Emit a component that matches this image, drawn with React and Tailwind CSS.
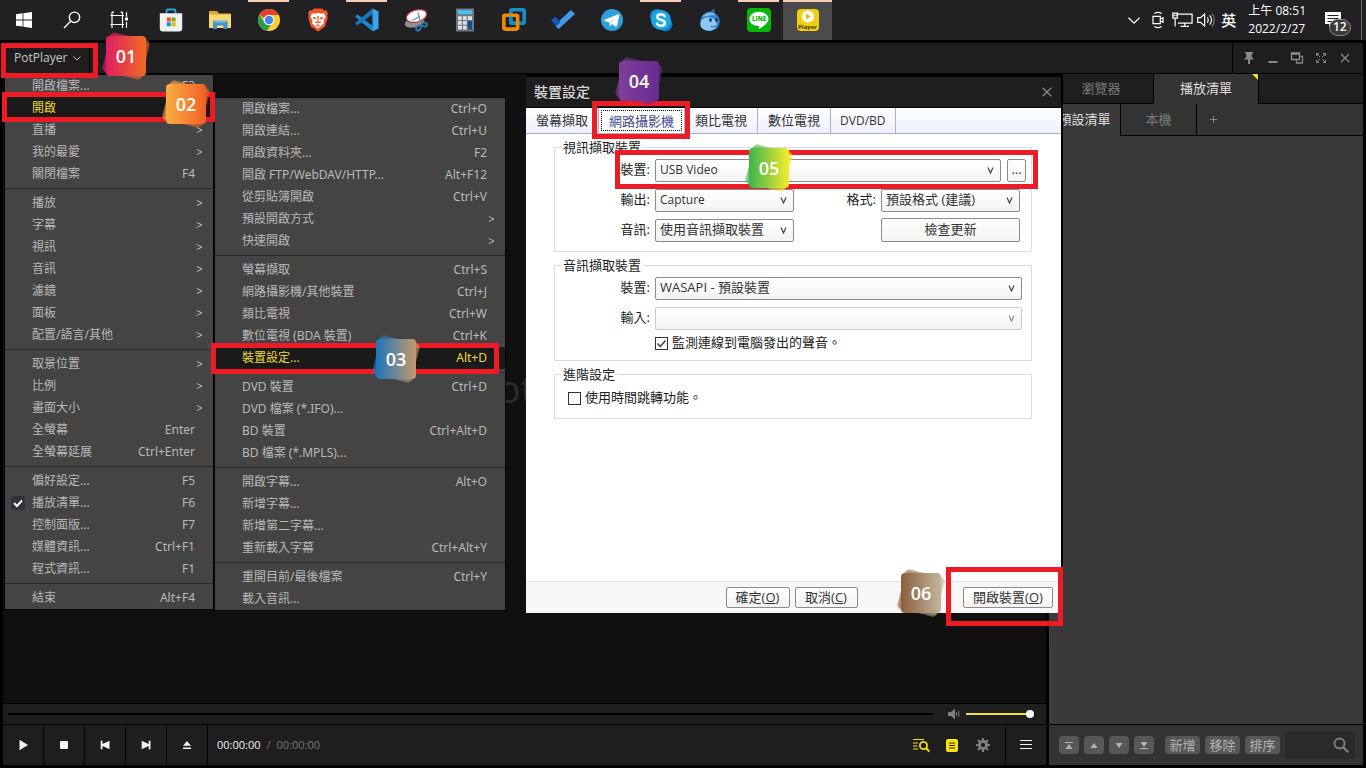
import React from "react";

const FONT = "font-['Open_Sans','Noto_Sans_CJK_TC',sans-serif]";

/* ---------- taskbar icons ---------- */

const Svg = ({ size = 24, children, ...p }) => (
  <svg width={size} height={size} viewBox="0 0 24 24" fill="none" aria-hidden="true" {...p}>
    {children}
  </svg>
);

const StartIcon = () => (
  <Svg>
    <path fill="#fff" d="M4 6.200l6.600-.9v6.200H4zM11.400 5.200L20 4v7.500h-8.600zM4 12.400h6.600v6.200L4 17.700zM11.400 12.400H20V20l-8.600-1.200z" />
  </Svg>
);
const SearchIcon = () => (
  <Svg stroke="#fff" strokeWidth="1.400">
    <circle cx="14.500" cy="9.300" r="5.200" />
    <path d="M10.600 13.200L4 20" />
  </Svg>
);
const TaskViewIcon = () => (
  <Svg stroke="#fff" strokeWidth="1.200">
    <path d="M4 4v3.500h10.500V4M4 20v-3.500h10.500V20M4 4.200h2M12.500 4.200h2M4 7.500v9M14.500 7.500v9M2.500 7.500h13.500M2.500 16.500h13.500M18.500 4v5M18.500 14v6" />
    <path d="M17 9.500h3v3h-3z" fill="#fff" stroke="none" />
  </Svg>
);
const StoreIcon = () => (
  <Svg>
    <path d="M7.500 6V2.800A1.300 1.300 0 018.800 1.500h6.400a1.300 1.300 0 011.300 1.300V6" stroke="#2aa5d8" strokeWidth="1.800" />
    <path d="M.8 5.200h22.400v15.300a3 3 0 01-3 3H3.800a3 3 0 01-3-3z" fill="#eef0f1" />
    <path d="M7.800 9.500h4v4h-4z" fill="#f25022" />
    <path d="M12.600 9.500h4v4h-4z" fill="#6fae1c" />
    <path d="M7.800 14.300h4v4h-4z" fill="#0a9be0" />
    <path d="M12.600 14.300h4v4h-4z" fill="#f5b400" />
  </Svg>
);
const FolderIcon = () => (
  <Svg>
    <path d="M1 3h8l2 2.500h12V20H1z" fill="#e3a52d" />
    <path d="M1 6.500h22V20H1z" fill="#fbd774" />
    <path d="M5 21v-8.200h14.500V21h-4v-3.600H9V21z" fill="#3f93d2" />
    <path d="M6.500 12.800h11.500v2H6.500z" fill="#6fb8e8" />
  </Svg>
);
const ChromeIcon = () => (
  <Svg>
    <circle cx="12" cy="12" r="11" fill="#f9cf31" />
    <path d="M2.500 6.500A11 11 0 0121.600 6.600L22 7H12a5 5 0 00-4.600 3.200z" fill="#e0412f" />
    <path d="M2.500 6.500l5.200 8.200A5 5 0 0012 17l2-.3-4.200 6.100A11 11 0 012.500 6.500z" fill="#2b9c4c" />
    <circle cx="12" cy="12" r="5.300" fill="#fff" />
    <circle cx="12" cy="12" r="4.200" fill="#4587f0" />
  </Svg>
);
const BraveIcon = () => (
  <Svg>
    <path d="M8 .5h8l2 2 2.300-.2 1.700 3-.8 2.200.5 2.500-2.600 8.500L12 23.500l-7.100-5L2.300 10l.5-2.500L2 5.300l1.700-3L6 2.500z" fill="#f1562b" />
    <path d="M6 5.200l3 .5 3-.9 3 .9 3-.5 1.500 3.400-2 4.200.4 2.400-2.600 2.600-3.300 2.700-3.300-2.700L6.100 15.200l.4-2.400-2-4.200z" fill="#fff" />
    <path d="M6.500 8.800l3.800.9-.6 1.700-2.200-.6zM17.500 8.800l-3.800.9.6 1.700 2.200-.6zM11.200 8h1.600l-.3 5h-1zM8 14l4-.8 4 .8-2.300 1.300L12 14.700l-1.700.6zM10 17.300l2-1.100 2 1.100-2 1.500z" fill="#f1562b" />
  </Svg>
);
const CodeIcon = () => (
  <Svg>
    <path d="M0 8.600L2.400 6.600 17.500 18v5.200L0 8.600z" fill="#1c8ad6" />
    <path d="M17.500.5L0 15.300l2.400 2.100L17.500 6z" fill="#1577bd" />
    <path d="M17.500.5l6 2.900v17.200l-6 2.900z" fill="#38a6ef" />
  </Svg>
);
const SnipIcon = () => (
  <Svg>
    <ellipse cx="10.500" cy="14.500" rx="10" ry="4.800" transform="rotate(-12 10.500 14.500)" fill="#8c8f92" />
    <ellipse cx="12.500" cy="8" rx="10.500" ry="6" transform="rotate(-16 12.500 8)" fill="#fbfbfb" stroke="#c2363e" strokeWidth="1.200" />
    <path d="M8.500 12.500l8-4.500M14 4.500l2.800 12" stroke="#8d9194" strokeWidth="1.300" />
    <ellipse cx="14.500" cy="20" rx="2" ry="2.800" transform="rotate(30 14.500 20)" stroke="#2f7fb4" strokeWidth="1.700" />
    <ellipse cx="20.300" cy="16.500" rx="2.800" ry="2" transform="rotate(10 20.300 16.500)" stroke="#2f7fb4" strokeWidth="1.700" />
  </Svg>
);
const CalcIcon = () => (
  <Svg>
    <path d="M3 .5h18v23H3z" fill="#71777d" />
    <path d="M4.800 2.200h14.400v4H4.800z" fill="#41c5ef" />
    <path d="M5 8.200h3.800V12H5zM9.900 8.200h3.800V12H9.900zM14.800 8.200h4.200V12h-4.200zM5 13h3.800v3.700H5zM9.900 13h3.800v3.700H9.900zM5 17.800h3.800v3.700H5zM9.900 17.800h3.800v3.700H9.900z" fill="#dfe3e6" />
    <path d="M14.800 13h4.200v8.500h-4.200z" fill="#12508f" />
  </Svg>
);
const VmwareIcon = () => (
  <Svg strokeWidth="3.600">
    <rect x="8.800" y="1.800" width="13.400" height="13.400" rx="1.500" stroke="#1690cc" />
    <rect x="1.800" y="7.300" width="13.800" height="13.800" rx="1.500" stroke="#f08a00" />
    <path d="M8.800 8.500v5.200a1.500 1.500 0 001.500 1.500H13" stroke="#1690cc" />
  </Svg>
);
const TodoIcon = () => (
  <Svg>
    <path d="M7.500 21L3.800 17 20 1.900l4 4z" fill="#3f9ced" />
    <path d="M0 12.500l4-4 5.600 5.600-4 4z" fill="#1b58b4" />
  </Svg>
);
const TelegramIcon = () => (
  <Svg>
    <circle cx="12" cy="12" r="11" fill="#2ba0da" />
    <path d="M4.500 11.700l13.800-5.500c.7-.2 1.200.2 1 1.100l-2.300 10.800c-.2.800-.7 1-1.400.6l-3.500-2.600-1.700 1.700c-.4.300-.8.100-.8-.4l-.3-2.900-4.700-1.600c-.8-.3-.8-.900-.1-1.200z" fill="#fff" />
    <path d="M9.500 14.500l6.500-5.700-5.200 6.200-.8 2z" fill="#b8d4e8" />
  </Svg>
);
const SkypeIcon = () => (
  <Svg>
    <circle cx="8" cy="8" r="7" fill="#1687cb" />
    <circle cx="16.500" cy="16.500" r="6.800" fill="#0f82c6" />
    <circle cx="12" cy="12" r="10" fill="#1ba7e8" />
    <path d="M15.800 8.200C15 6.800 13.600 6.300 12 6.300c-2.200 0-3.700 1.100-3.700 2.800 0 3.900 7.600 1.900 7.600 5.600 0 1.900-1.700 3-3.900 3-1.900 0-3.400-.7-4.100-2.200" stroke="#fff" strokeWidth="2.400" strokeLinecap="round" />
  </Svg>
);
const DropIcon = () => (
  <Svg>
    <path d="M11 5l5-4.500 1 5z" fill="#2d6fb5" />
    <circle cx="12" cy="13.500" r="9.700" fill="#3484cf" />
    <ellipse cx="10.500" cy="16" rx="8.300" ry="6.700" fill="#8cc8f3" />
    <path d="M4 9c3-5 10-6 14-2-5 0-10 1-14 2z" fill="#78b8ea" />
    <ellipse cx="12.500" cy="12" rx="1.200" ry="2" fill="#11263f" />
    <ellipse cx="18.500" cy="12" rx="1.200" ry="2" fill="#11263f" />
    <path d="M13 18.500c2 .7 4 .2 5-1" stroke="#2b5d93" />
  </Svg>
);
const LineIcon = () => (
  <Svg>
    <rect width="24" height="24" rx="4" fill="#06b806" />
    <path d="M12 3.800c5.200 0 9.500 3.100 9.500 7.100 0 3.700-4.900 7.200-9 9.800-.6.300-.7-.1-.6-.6l.1-2.100C6.300 18 2.500 14.800 2.500 10.900c0-4 4.300-7.100 9.500-7.100z" fill="#fff" />
    <text x="12" y="13" textAnchor="middle" fontSize="6" fontWeight="800" fill="#06b806">LINE</text>
  </Svg>
);
const PotIcon = () => (
  <span className="grid h-[22px] w-[22px] justify-items-center rounded-sm bg-[#f2ce10]">
    <svg width="14" height="13" viewBox="0 0 14 13" className="mt-px" aria-hidden="true">
      <circle cx="7" cy="6.500" r="6" fill="#fff" />
      <path d="M5 3.500l5 3-5 3z" fill="#e8b90a" />
    </svg>
    <span className="text-[6px] font-bold leading-[8px] text-[#3b3208]">Player</span>
  </span>
);

const TASKS = [
  ["Microsoft Store", StoreIcon, ""],
  ["檔案總管", FolderIcon, ""],
  ["Chrome", ChromeIcon, "on"],
  ["Brave", BraveIcon, ""],
  ["VS Code", CodeIcon, "on"],
  ["剪取工具", SnipIcon, ""],
  ["小算盤", CalcIcon, ""],
  ["VMware", VmwareIcon, ""],
  ["To Do", TodoIcon, ""],
  ["Telegram", TelegramIcon, ""],
  ["Skype", SkypeIcon, "on"],
  ["Drop", DropIcon, ""],
  ["LINE", LineIcon, "on"],
  ["PotPlayer", PotIcon, "active"],
];

function Taskbar() {
  return (
    <header className="flex h-10 shrink-0 items-stretch bg-[#212123] text-white">
      {[["開始", StartIcon], ["搜尋", SearchIcon], ["工作檢視", TaskViewIcon]].map(([n, I]) => (
        <button key={n} aria-label={n} className="grid w-12 place-items-center"><I /></button>
      ))}
      <nav className="flex flex-1 pl-0.5">
        {TASKS.map(([n, I, s]) => (
          <button
            key={n}
            aria-label={n}
            className={`relative grid w-[49px] shrink-0 place-items-center ${s === "active" ? "bg-[#4b4b4c]" : ""}`}
          >
            {s && <span className={`absolute top-0 h-0.5 bg-[#f9ceb2] ${s === "active" ? "inset-x-0" : "inset-x-1"}`} />}
            <I />
          </button>
        ))}
      </nav>
      <div className="flex items-center gap-0.5">
        <Svg size={22} stroke="#fff" strokeWidth="1.400"><path d="M6 9.500l6 6 6-6" /></Svg>
        <Svg size={22} stroke="#fff" strokeWidth="1.300">
          <path d="M8 5c2.500-1.600 5.500-1.600 8 0M8 19c2.500 1.600 5.500 1.600 8 0M6.500 8h8v8h-8zM14.500 11l3-1.500v5l-3-1.500" />
        </Svg>
        <Svg size={22} stroke="#fff" strokeWidth="1.300">
          <path d="M6.500 5.500H23v10H7.500M15 15.500v3.500M10.500 19h9M4.500 10v9" />
          <path d="M2 4.500h5V10H2zM3.500 6v2M5.500 6v2" />
        </Svg>
        <Svg size={22} stroke="#fff" strokeWidth="1.300">
          <path d="M3 9.500h3l4.500-4v13l-4.500-4H3zM13.500 9c1.200 1.500 1.200 4.500 0 6M16 7c2.500 3 2.500 7 0 10" />
          <path d="M18.500 5c3.500 4 3.500 10 0 14" stroke="#777" />
        </Svg>
      </div>
      <span className="self-center pl-1 text-[15px] font-medium leading-5">英</span>
      <time className="self-center pl-3 text-[12px] leading-[18px]">上午 08:51<br />2022/2/27</time>
      <button aria-label="通知" className="relative ml-3.5 grid w-10 place-items-center">
        <svg width="36" height="32" viewBox="0 0 36 32" aria-hidden="true">
          <path d="M3 8h16v12H11l-4 4v-4H3z" fill="#fff" />
          <path d="M5.500 11.500h11M5.500 14.500h11M5.500 17.500h6" stroke="#222" strokeWidth="1.200" />
          <rect x="7.500" y="15.500" width="21" height="16" rx="8" fill="#3a3a3a" stroke="#8a8a8a" />
        </svg>
        <span className="absolute left-[13px] top-[18px] text-[12px] font-semibold leading-[18px]">12</span>
      </button>
      <span className="ml-px mr-1 w-px bg-[#6a6a6a]" />
    </header>
  );
}

/* ---------- context menus ---------- */

const MENU_A = [
  [["開啟檔案...", "F3"], ["開啟", ">", "hot"], ["直播", ">"], ["我的最愛", ">"], ["關閉檔案", "F4"]],
  [["播放", ">"], ["字幕", ">"], ["視訊", ">"], ["音訊", ">"], ["濾鏡", ">"], ["面板", ">"], ["配置/語言/其他", ">"]],
  [["取景位置", ">"], ["比例", ">"], ["畫面大小", ">"], ["全螢幕", "Enter"], ["全螢幕延展", "Ctrl+Enter"]],
  [["偏好設定...", "F5"], ["播放清單...", "F6", "check"], ["控制面版...", "F7"], ["媒體資訊...", "Ctrl+F1"], ["程式資訊...", "F1"]],
  [["結束", "Alt+F4"]],
];
const MENU_B = [
  [["開啟檔案...", "Ctrl+O"], ["開啟連結...", "Ctrl+U"], ["開啟資料夾...", "F2"], ["開啟 FTP/WebDAV/HTTP...", "Alt+F12"], ["從剪貼簿開啟", "Ctrl+V"], ["預設開啟方式", ">"], ["快速開啟", ">"]],
  [["螢幕擷取", "Ctrl+S"], ["網路攝影機/其他裝置", "Ctrl+J"], ["類比電視", "Ctrl+W"], ["數位電視 (BDA 裝置)", "Ctrl+K"], ["裝置設定...", "Alt+D", "hot"]],
  [["DVD 裝置", "Ctrl+D"], ["DVD 檔案 (*.IFO)...", ""], ["BD 裝置", "Ctrl+Alt+D"], ["BD 檔案 (*.MPLS)...", ""]],
  [["開啟字幕...", "Alt+O"], ["新增字幕...", ""], ["新增第二字幕...", ""], ["重新載入字幕", "Ctrl+Alt+Y"]],
  [["重開目前/最後檔案", "Ctrl+Y"], ["載入音訊...", ""]],
];

function Menu({ groups, className }) {
  return (
    <div className={`absolute bg-[#444444] font-['Noto_Sans','Noto_Sans_CJK_TC',sans-serif] text-[12px] text-[#b9b9b9] shadow-[0_0_0_1px_#050505] ${className}`}>
      {groups.map((g, i) => (
        <ul key={i} className={i ? "mt-[3px] border-t border-[#2c2c2c] pt-[3px]" : ""}>
          {g.map(([label, key, state]) => (
            <li key={label}>
              <button
                className={`flex h-[22px] w-full items-center leading-[22px] ${state === "hot" ? "bg-[#1a1a1a] text-[#ecd92e]" : ""}`}
              >
                <span className="flex w-[27px] shrink-0 items-center pl-1.5">
                  {state === "check" && (
                    <svg width="14" height="14" viewBox="0 0 14 14" aria-hidden="true">
                      <rect width="14" height="14" rx="2" fill="#32323a" />
                      <path d="M3 7l3 3 5-5.500" stroke="#fff" strokeWidth="2" fill="none" />
                    </svg>
                  )}
                </span>
                <span className="flex-1 whitespace-nowrap text-left">{label}</span>
                {key === ">" ? (
                  <svg width="7" height="8" viewBox="0 0 7 8" className="mr-2.5" aria-hidden="true">
                    <path d="M.8 1.500L6 4 .8 6.500" stroke="currentColor" fill="none" />
                  </svg>
                ) : (
                  <span className="whitespace-nowrap pr-[18px]">{key}</span>
                )}
              </button>
            </li>
          ))}
        </ul>
      ))}
    </div>
  );
}

/* ---------- device dialog ---------- */

function Combo({ id, value, className, muted, small }) {
  return (
    <span className={`grid h-[23px] ${className}`}>
      <select
        id={id}
        disabled={muted}
        defaultValue={value}
        className={`col-start-1 row-start-1 w-full appearance-none rounded-xs border bg-linear-to-b from-white to-[#f3f3f3] pl-1 pr-6 text-[#333] opacity-100 ${small ? "text-[12px]" : "text-[13px]"} ${muted ? "border-[#c9c9c9]" : "border-[#8b8b8b]"}`}
      >
        <option value={value}>{value}</option>
      </select>
      <svg width="7" height="8" viewBox="0 0 7 8" className="pointer-events-none col-start-1 row-start-1 mr-[7px] self-center justify-self-end" aria-hidden="true">
        <path d="M1 1.500l2.500 5.500L6 1.500" stroke={muted ? "#888" : "#444"} strokeWidth="1.200" fill="none" />
      </svg>
    </span>
  );
}

const Row = ({ children }) => <div className="flex h-[30px] items-center">{children}</div>;
const Label = ({ id, children, className = "w-[95px]" }) => (
  <label htmlFor={id} className={`mr-[5px] shrink-0 text-right ${className}`}>{children}</label>
);
const Group = ({ title, children, className }) => (
  <fieldset className={`min-w-0 border border-[#dcdcdc] ${className}`}>
    <legend className="ml-1.5 h-4 px-0.5 leading-4">{title}</legend>
    {children}
  </fieldset>
);
const Check = ({ id, label, checked, className }) => (
  <div className={`flex h-5 items-center gap-1 ${className}`}>
    <span className="grid">
      <input id={id} type="checkbox" defaultChecked={checked} className="peer col-start-1 row-start-1 h-[13px] w-[13px] appearance-none border border-[#333] bg-white" />
      <svg viewBox="0 0 13 13" className="pointer-events-none invisible col-start-1 row-start-1 h-[13px] w-[13px] peer-checked:visible" aria-hidden="true">
        <path d="M2.500 6.500l2.800 3L10.500 3.500" stroke="#333" strokeWidth="1.300" fill="none" />
      </svg>
    </span>
    <label htmlFor={id}>{label}</label>
  </div>
);
const BTN = "rounded-xs border border-[#8b8b8b] bg-linear-to-b from-white to-[#f3f3f3] text-[#333]";

function Dialog() {
  return (
    <section role="dialog" aria-label="裝置設定" className="absolute left-[526px] top-[74px] flex h-[539px] w-[537px] flex-col border-r-2 border-t-[3px] border-black bg-white text-[13px] text-[#1c1c1c]">
      <div className="flex h-[31px] items-center justify-between border-b border-black bg-[#1e1e1e] px-2">
        <h2 className="text-[14px] font-medium leading-5 text-[#d9d9d9]">裝置設定</h2>
        <button aria-label="關閉" className="p-px text-[#9a9a9a]">
          <svg width="10" height="10" viewBox="0 0 10 10" aria-hidden="true"><path d="M.8.8l8.400 8.400M9.200.8L.8 9.200" stroke="currentColor" strokeWidth="1.200" /></svg>
        </button>
      </div>
      <div role="tablist" className="flex h-[26px] border-b border-[#a9aed2] bg-linear-to-b from-white to-[#edf0fd]">
        {["螢幕擷取", "網路攝影機", "類比電視", "數位電視"].map((t, i) => (
          <button
            key={t}
            role="tab"
            aria-selected={i === 1}
            className={`border-r border-[#a9aed2] ${i === 1 ? "bg-white p-0.5 text-[#3c4a8c]" : "px-2.5 text-[#333]"}`}
          >
            {i === 1 ? <span className="block h-full border border-dotted border-black px-[7px] leading-5">{t}</span> : t}
          </button>
        ))}
        <button role="tab" aria-selected="false" className="border-r border-[#a9aed2] px-[9px] text-[12px] text-[#333]">DVD/BD</button>
      </div>
      <div className="flex flex-1 flex-col gap-[5px] pl-7 pr-[29px] pt-[5px]">
        <Group title="視訊擷取裝置" className="pb-1.5">
          <Row>
            <Label id="dev">裝置:</Label>
            <Combo id="dev" value="USB Video" small className="flex-1" />
            <button className={`ml-1.5 mr-[5px] h-[23px] w-[19px] ${BTN}`}>...</button>
          </Row>
          <Row>
            <Label id="out">輸出:</Label>
            <Combo id="out" value="Capture" small className="w-[139px]" />
            <Label id="fmt" className="flex-1">格式:</Label>
            <Combo id="fmt" value="預設格式 (建議)" className="mr-[11px] w-[139px]" />
          </Row>
          <Row>
            <Label id="aud">音訊:</Label>
            <Combo id="aud" value="使用音訊擷取裝置" className="w-[139px]" />
            <button className={`ml-auto mr-[11px] h-6 w-[139px] ${BTN}`}>檢查更新</button>
          </Row>
        </Group>
        <Group title="音訊擷取裝置" className="pb-[7px]">
          <Row>
            <Label id="adev">裝置:</Label>
            <Combo id="adev" value="WASAPI - 預設裝置" className="mr-[9px] flex-1" />
          </Row>
          <Row>
            <Label id="ain">輸入:</Label>
            <Combo id="ain" value="" muted className="mr-[9px] flex-1" />
          </Row>
          <Check id="mon" checked label="監測連線到電腦發出的聲音。" className="pl-[100px]" />
        </Group>
        <Group title="進階設定" className="pb-2.5">
          <Check id="jump" label="使用時間跳轉功能。" className="mt-1.5 pl-[13px]" />
        </Group>
      </div>
      <div className="grid h-8 grid-cols-[1fr_auto_1fr] items-center border-t border-[#e4e4e4] bg-[#f7f7f7] pl-1 pr-2">
        <span />
        <div className="flex gap-[5px]">
          <button className={`h-[21px] w-16 leading-[19px] ${BTN}`}>確定(<u>O</u>)</button>
          <button className={`h-[21px] w-[63px] leading-[19px] ${BTN}`}>取消(<u>C</u>)</button>
        </div>
        <button className={`h-[21px] w-[90px] justify-self-end leading-[19px] ${BTN}`}>開啟裝置(<u>O</u>)</button>
      </div>
    </section>
  );
}

/* ---------- annotations ---------- */

const FRAMES = [
  "left-[1px] top-[43px] h-[35px] w-[97px]",
  "left-[2px] top-[92px] h-[30px] w-[213px]",
  "left-[211px] top-[343px] h-[31px] w-[288px]",
  "left-[592px] top-[101px] h-[38px] w-[98px]",
  "left-[615px] top-[150px] h-[39px] w-[423px]",
  "left-[946px] top-[567px] h-[59px] w-[117px]",
];
const BADGES = [
  ["01", "#dc1f63", "#f26a23", "left-[106px] top-[36px]"],
  ["02", "#fbae42", "#f15f25", "left-[166px] top-[84px]"],
  ["03", "#1c75bc", "#c49a6c", "left-[376px] top-[339px]"],
  ["04", "#7f3f98", "#652d90", "left-[619px] top-[61px]"],
  ["05", "#39b54a", "#f6ec2f", "left-[749px] top-[148px]"],
  ["06", "#8b5e3c", "#c2b59b", "left-[901px] top-[573px]"],
];

function Badge({ n, from, to, place }) {
  const id = "g" + n;
  return (
    <div className={`pointer-events-none absolute grid h-10 w-10 place-items-center ${place}`}>
      <svg width="40" height="40" viewBox="0 0 40 40" className="col-start-1 row-start-1 overflow-visible" aria-hidden="true">
        <defs>
          <linearGradient id={id}><stop stopColor={from} /><stop offset="1" stopColor={to} /></linearGradient>
        </defs>
        <rect width="40" height="40" rx="4" fill={`url(#${id})`} opacity=".5" transform="rotate(15 20 20)" />
        <rect width="40" height="40" rx="4" fill={`url(#${id})`} opacity=".4" transform="rotate(9 20 20)" />
        <rect width="40" height="40" rx="4" fill={`url(#${id})`} />
      </svg>
      <span className="z-10 col-start-1 row-start-1 text-[18px] font-semibold leading-6 text-white">{n}</span>
    </div>
  );
}

/* ---------- player ---------- */

function WindowButtons() {
  const icons = [
    ["置頂", <path key="a" d="M4 2h8v1.500h-1.200V7L13 9.500H9V14H7V9.500H3L5.200 7V3.500H4z" fill="currentColor" />],
    ["最小化", <path key="b" d="M3.500 11h9v2h-9z" fill="currentColor" />],
    ["還原", <path key="c" d="M2.500 3h8v6.500h-8zM2.500 4h8M11.500 6.500h2v6.500h-6v-2.500" stroke="currentColor" strokeWidth="1.300" fill="none" />],
    ["全螢幕", <path key="d" d="M3.500 6V3.500H6M10 3.500h2.500V6M12.500 10v2.500H10M6 12.500H3.500V10M4 4l3 3M12 4L9 7M12 12L9 9M4 12l3-3" stroke="currentColor" fill="none" />],
    ["關閉", <path key="e" d="M4 4l8 8M12 4l-8 8" stroke="currentColor" strokeWidth="1.300" fill="none" />],
  ];
  return (
    <div className="flex w-[131px] items-center border-l border-black pl-1">
      {icons.map(([n, p]) => (
        <button key={n} aria-label={n} className="grid h-full w-6 place-items-center text-[#8a8a8a]">
          <svg width="16" height="16" viewBox="0 0 16 16" aria-hidden="true">{p}</svg>
        </button>
      ))}
    </div>
  );
}

function Transport() {
  const icons = [
    ["播放", <path key="a" d="M4.500 2.800v10.400L13 8z" />],
    ["停止", <rect key="b" x="4" y="4" width="8" height="8" rx="1" />],
    ["上一個", <path key="c" d="M3.700 3.700h1.800v3.300L12.500 3.700v8.600L5.500 9v3.300H3.700z" />],
    ["下一個", <path key="d" d="M12.500 3.700h-1.800v3.300L3.700 3.700v8.600L10.700 9v3.300h1.800z" />],
    ["開啟", <path key="e" d="M8 4l4 4.800H4zM4 10.500h8V12H4z" />],
  ];
  return (
    <div className="flex h-[41px] items-stretch border-t border-black">
      {icons.map(([n, p]) => (
        <button key={n} aria-label={n} className="grid w-[41px] place-items-center border-r border-black">
          <svg width="16" height="16" viewBox="0 0 16 16" fill="#f2f2f2" aria-hidden="true">{p}</svg>
        </button>
      ))}
      <p className="flex items-center gap-1.5 pl-[9px] text-[11px] leading-4 text-[#777]">
        <span className="text-[#f0f0f0]">00:00:00</span><span>/</span><span>00:00:00</span>
      </p>
      <div className="ml-auto flex items-center gap-4 pr-[15px]">
        <button aria-label="字幕搜尋">
          <svg width="17" height="16" viewBox="0 0 17 16" aria-hidden="true">
            <path d="M0 2.500h11M0 6h5M0 9h4.500M0 12h5" stroke="#f5de10" strokeWidth="1.200" />
            <circle cx="10.500" cy="8.500" r="3.600" stroke="#f5de10" strokeWidth="1.800" fill="none" />
            <path d="M13 11l3.300 3.500" stroke="#f5de10" strokeWidth="2" />
          </svg>
        </button>
        <button aria-label="播放清單">
          <svg width="12" height="13" viewBox="0 0 12 13" aria-hidden="true">
            <rect width="12" height="13" rx="2" fill="#fbe20a" />
            <path d="M3 4h6M3 6.500h6M3 9h6" stroke="#26240f" />
          </svg>
        </button>
        <button aria-label="設定" className="ml-0.5">
          <svg width="14" height="14" viewBox="0 0 14 14" aria-hidden="true">
            <circle cx="7" cy="7" r="3.500" stroke="#7e7e7e" strokeWidth="3" fill="none" />
            <path d="M7 0v3M7 11v3M0 7h3M11 7h3M2 2l2 2M10 10l2 2M12 2l-2 2M4 10l-2 2" stroke="#7e7e7e" strokeWidth="2.200" />
            <circle cx="7" cy="7" r="1.800" fill="#1e1e1e" />
          </svg>
        </button>
      </div>
      <button aria-label="功能表" className="grid w-[41px] place-items-center border-l border-black">
        <svg width="12" height="10" viewBox="0 0 12 10" aria-hidden="true"><path d="M0 .5h12M0 4.500h12M0 8.500h12" stroke="#f0f0f0" /></svg>
      </button>
    </div>
  );
}

function Playlist() {
  const arrows = [
    ["移到最上", "M6 6h8v1H6zM10 8l3.500 5h-7z"],
    ["上移", "M10 7l3.500 5h-7z"],
    ["下移", "M6.500 7h7L10 12z"],
    ["移到最下", "M6.500 6h7L10 11zM6 12h8v1H6z"],
  ];
  return (
    <aside className="flex w-[317px] shrink-0 flex-col border-l-[3px] border-black bg-[#3a3a3a] text-[13px]">
      <div role="tablist" className="flex h-[30px] bg-[#1e1e1e]">
        <button role="tab" aria-selected="false" className="w-[105px] border-b border-r border-black text-[#7c7c7c]">瀏覽器</button>
        <button role="tab" aria-selected="true" className="relative w-[105px] border-r border-black bg-[#333] text-[#dedede]">
          播放清單
          <svg width="6" height="6" viewBox="0 0 6 6" className="absolute right-0 top-0" aria-hidden="true"><path d="M0 0h6v6z" fill="#fbe20a" /></svg>
        </button>
        <span className="flex-1 border-b border-black" />
      </div>
      <div className="flex h-8 bg-[#333]">
        <button className="w-[72px] border-r border-black bg-[#3a3a3a] text-[#dedede]">預設清單</button>
        <button className="w-[76px] border-b border-r border-black text-[#7c7c7c]">本機</button>
        <button aria-label="新增清單" className="flex flex-1 items-center border-b border-black pl-3 text-[#8a8a8a]">
          <svg width="9" height="9" viewBox="0 0 9 9" aria-hidden="true"><path d="M4.500 1v7M1 4.500h7" stroke="currentColor" /></svg>
        </button>
      </div>
      <div className="flex-1" />
      <div className="flex h-[41px] items-center gap-[5px] border-t border-black bg-[#333] pl-2.5 pr-2">
        {arrows.map(([n, d]) => (
          <button key={n} aria-label={n} className="rounded-sm bg-[#575757]">
            <svg width="20" height="18" viewBox="0 0 20 18" aria-hidden="true"><path d={d} fill="#b4b4b4" /></svg>
          </button>
        ))}
        <div className="ml-1.5 flex gap-[5px]">
          {["新增", "移除", "排序"].map((t) => (
            <button key={t} className="h-[18px] w-[35px] rounded-sm bg-[#575757] leading-[18px] text-[#b4b4b4]">{t}</button>
          ))}
        </div>
        <div className="flex h-7 min-w-0 flex-1 items-center rounded-sm bg-[#2a2a2a] pr-1.5">
          <input aria-label="搜尋" className="min-w-0 flex-1 bg-transparent text-[12px] text-white outline-none" />
          <svg width="16" height="16" viewBox="0 0 16 16" aria-hidden="true">
            <circle cx="6.500" cy="6.500" r="5" stroke="#808080" strokeWidth="1.800" fill="none" />
            <path d="M10.200 10.200l5 5" stroke="#808080" strokeWidth="2.200" />
          </svg>
        </div>
      </div>
    </aside>
  );
}

export default function App() {
  return (
    <div className={`relative flex min-h-screen flex-col overflow-hidden bg-black ${FONT}`}>
      <Taskbar />
      <main className="m-[3px] flex flex-1 flex-col bg-[#1e1e1e]">
        <div className="flex h-[31px] shrink-0 items-stretch justify-between border-b border-black">
          <button className="flex items-center gap-1.5 border-r border-black pl-[11px] pr-2 text-[12px] text-[#c8c8c8]">
            PotPlayer
            <svg width="8" height="5" viewBox="0 0 8 5" aria-hidden="true"><path d="M.5.500L4 4 7.500.500" stroke="currentColor" fill="none" /></svg>
          </button>
          <WindowButtons />
        </div>
        <div className="flex flex-1 items-stretch">
          <div className="flex min-w-0 flex-1 flex-col">
            <div className="flex flex-1 items-center justify-center bg-[#101010] pr-10 text-[38px] text-[#2b2b2b]">Pot</div>
            <div className="flex h-[21px] items-center border-t border-black pl-[5px] pr-2.5">
              <input
                type="range"
                aria-label="播放位置"
                defaultValue="0"
                className="h-0.5 min-w-0 flex-1 appearance-none bg-black [&::-webkit-slider-thumb]:appearance-none"
              />
              <svg width="12" height="12" viewBox="0 0 12 12" className="ml-[15px] mr-1.5" aria-hidden="true">
                <path d="M0 4h3l4-3.500v11L3 8H0z" fill="#7e7e7e" />
                <path d="M8.500 4v4M10.800 3v6" stroke="#7e7e7e" />
              </svg>
              <input
                type="range"
                aria-label="音量"
                defaultValue="97"
                className="h-2 w-[70px] appearance-none bg-transparent [&::-webkit-slider-runnable-track]:h-0.5 [&::-webkit-slider-runnable-track]:bg-linear-to-r [&::-webkit-slider-runnable-track]:from-[#f0dc3c] [&::-webkit-slider-runnable-track]:from-93% [&::-webkit-slider-runnable-track]:to-black [&::-webkit-slider-runnable-track]:to-93% [&::-webkit-slider-thumb]:-mt-[3px] [&::-webkit-slider-thumb]:h-2 [&::-webkit-slider-thumb]:w-2 [&::-webkit-slider-thumb]:appearance-none [&::-webkit-slider-thumb]:rounded-full [&::-webkit-slider-thumb]:bg-white"
              />
            </div>
            <Transport />
          </div>
          <Playlist />
        </div>
      </main>
      <Menu groups={MENU_A} className="left-[5px] top-[75px] w-[208px]" />
      <Menu groups={MENU_B} className="left-[215px] top-[98px] w-[290px]" />
      <Dialog />
      {FRAMES.map((f) => (
        <div key={f} className={`pointer-events-none absolute border-[5px] border-[#ed1c24] ${f}`} />
      ))}
      {BADGES.map(([n, from, to, place]) => (
        <Badge key={n} n={n} from={from} to={to} place={place} />
      ))}
    </div>
  );
}
